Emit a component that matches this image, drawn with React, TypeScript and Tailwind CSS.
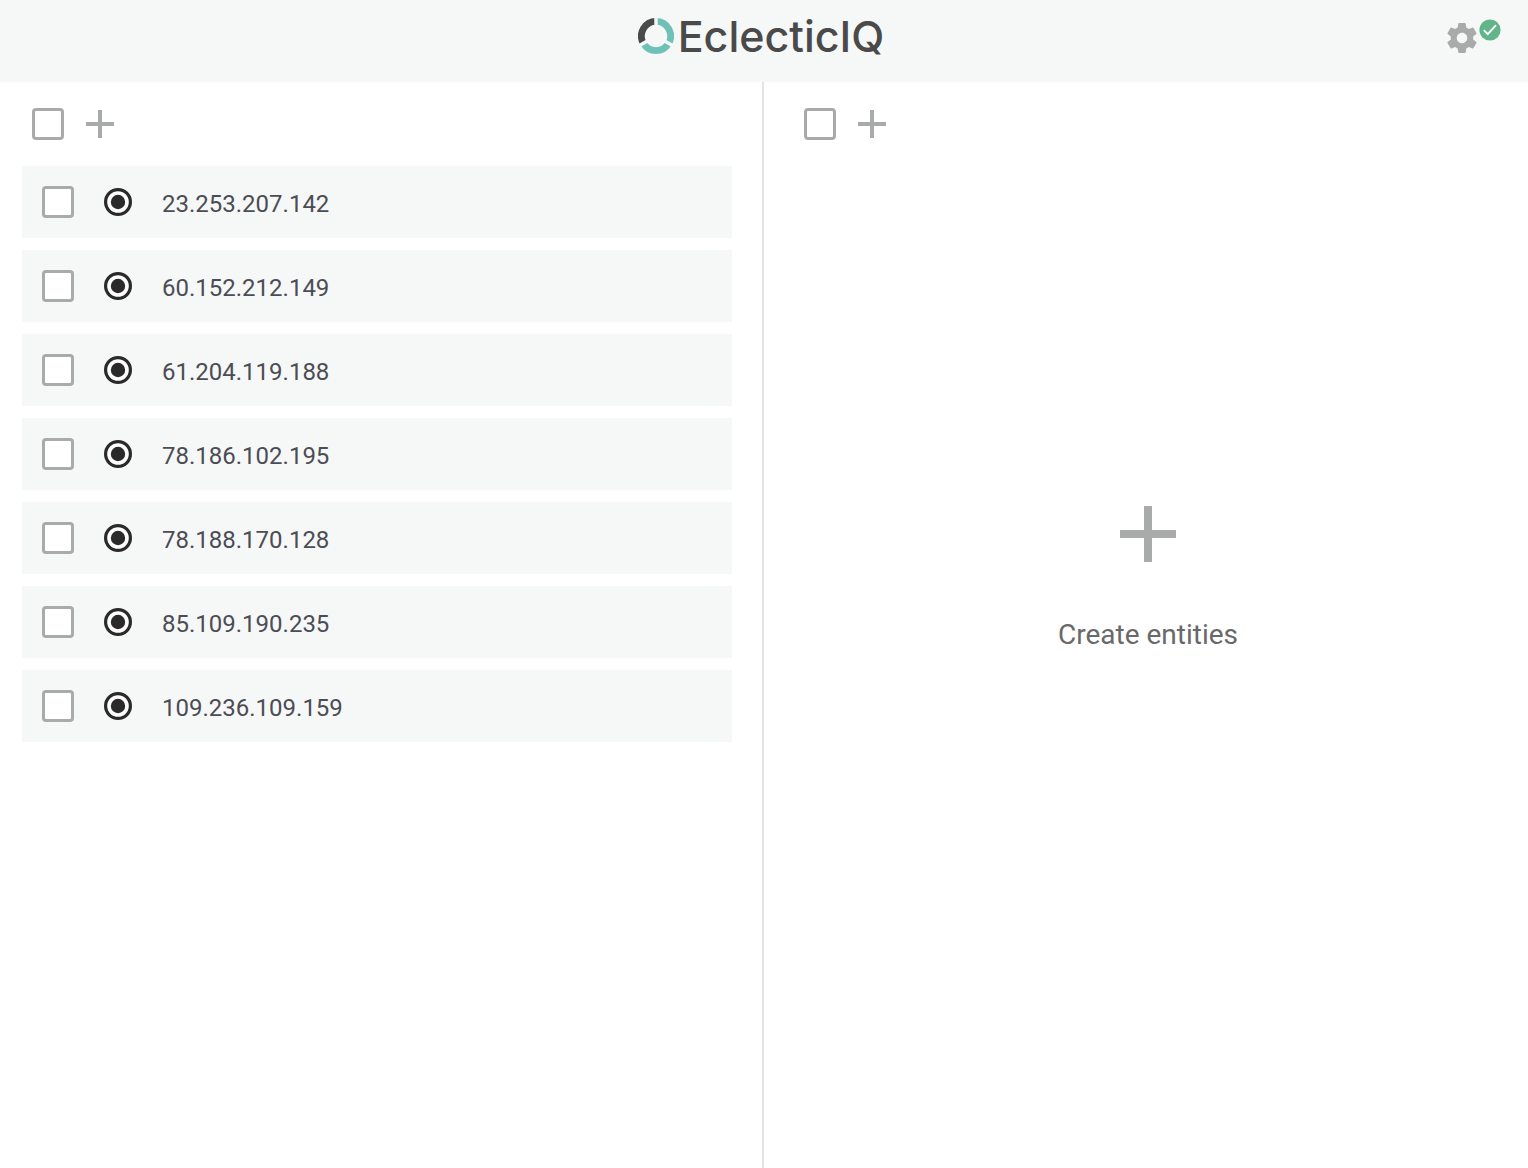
import { useState } from "react";

const observables = [
  "23.253.207.142",
  "60.152.212.149",
  "61.204.119.188",
  "78.186.102.195",
  "78.188.170.128",
  "85.109.190.235",
  "109.236.109.159",
];

function LogoMark() {
  return (
    <svg className="size-9 shrink-0" viewBox="-18 -18 36 36" fill="none" aria-hidden="true">
      <g strokeWidth="6.8">
        <path d="M-12.64 7.3A14.6 14.6 0 0 1 0 -14.6" stroke="#4a4a4a" />
        <path d="M0 -14.6A14.6 14.6 0 0 1 12.64 7.3" stroke="#6fc1b7" />
        <path d="M12.64 7.3A14.6 14.6 0 0 1 -12.64 7.3" stroke="#6fc1b7" />
      </g>
      <path d="M0 0V-19M0 0L-16.5 9.5M0 0L16.5 9.5" stroke="#f6f8f7" strokeWidth="3.4" />
    </svg>
  );
}

function GearIcon() {
  return (
    <svg className="size-[30px]" viewBox="2 2 20 20" fill="#a9abaa" aria-hidden="true">
      <path d="M19.43 12.98c.04-.32.07-.64.07-.98s-.03-.66-.07-.98l2.11-1.65c.19-.15.24-.42.12-.64l-2-3.46c-.12-.22-.39-.3-.61-.22l-2.49 1c-.52-.4-1.08-.73-1.69-.98l-.38-2.65C14.46 2.18 14.25 2 14 2h-4c-.25 0-.46.18-.49.42l-.38 2.65c-.61.25-1.17.59-1.69.98l-2.49-1c-.23-.09-.49 0-.61.22l-2 3.46c-.13.22-.07.49.12.64l2.11 1.65c-.04.32-.07.65-.07.98s.03.66.07.98l-2.11 1.65c-.19.15-.24.42-.12.64l2 3.46c.12.22.39.3.61.22l2.49-1c.52.4 1.08.73 1.69.98l.38 2.65c.03.24.24.42.49.42h4c.25 0 .46-.18.49-.42l.38-2.65c.61-.25 1.17-.59 1.69-.98l2.49 1c.23.09.49 0 .61-.22l2-3.46c.12-.22.07-.49-.12-.64l-2.11-1.65zM12 15.5c-1.93 0-3.5-1.57-3.5-3.5s1.57-3.5 3.5-3.5 3.5 1.57 3.5 3.5-1.57 3.5-3.5 3.5z" />
    </svg>
  );
}

function StatusBadge() {
  return (
    <svg className="mb-4 size-[22px]" viewBox="0 0 22 22" fill="none" aria-hidden="true">
      <circle cx="11" cy="11" r="10.6" fill="#61b588" />
      <path d="M4.8 11.2L8.8 15.2L17 6.2" stroke="#fff" strokeWidth="1.9" />
    </svg>
  );
}

function PlusIcon({ className }: { className: string }) {
  return (
    <svg className={className} viewBox="0 0 14 14" fill="#a9abaa" aria-hidden="true">
      <path d="M6 0h2v6h6v2H8v6H6V8H0V6h6z" />
    </svg>
  );
}

function ObservableIcon() {
  return (
    <svg className="size-7 shrink-0" viewBox="0 0 28 28" aria-hidden="true">
      <circle cx="14" cy="14" r="12.4" fill="#fff" stroke="#2a2a2a" strokeWidth="3.2" />
      <circle cx="14" cy="14" r="7.2" fill="#2a2a2a" />
    </svg>
  );
}

type CheckboxProps = {
  label?: string;
  id?: string;
  checked: boolean;
  onChange: (checked: boolean) => void;
};

function Checkbox({ label, id, checked, onChange }: CheckboxProps) {
  return (
    <input
      type="checkbox"
      id={id}
      aria-label={label}
      checked={checked}
      onChange={(e) => onChange(e.target.checked)}
      className="size-8 shrink-0 cursor-pointer appearance-none rounded border-3 border-[#a9abaa] bg-white checked:bg-[#6fc1b7]"
    />
  );
}

type ToolbarProps = {
  selectLabel: string;
  addLabel: string;
  checked: boolean;
  onChange: (checked: boolean) => void;
};

function Toolbar({ selectLabel, addLabel, checked, onChange }: ToolbarProps) {
  return (
    <div className="flex items-center gap-[22px] py-[26px]">
      <Checkbox label={selectLabel} checked={checked} onChange={onChange} />
      <button type="button" aria-label={addLabel} className="cursor-pointer">
        <PlusIcon className="size-7" />
      </button>
    </div>
  );
}

export default function App() {
  const [selected, setSelected] = useState<string[]>([]);
  const [allEntities, setAllEntities] = useState(false);

  const toggle = (value: string, on: boolean) =>
    setSelected((current) => (on ? [...current, value] : current.filter((v) => v !== value)));

  return (
    <div className="flex min-h-screen flex-col bg-white font-['Roboto',sans-serif]">
      <header className="grid h-[82px] grid-cols-[1fr_auto_1fr] items-center bg-[#f6f8f7] pb-2.5">
        <h1 className="col-start-2 flex items-center gap-1 pr-1.5 font-['Inter',sans-serif] text-[43px] leading-[48px] font-medium text-[#4a4a4a]">
          <LogoMark />
          EclecticIQ
        </h1>
        <button
          type="button"
          aria-label="Settings, connected"
          className="mr-[27px] flex cursor-pointer items-center gap-0.5 justify-self-end pt-1"
        >
          <GearIcon />
          <StatusBadge />
        </button>
      </header>

      <main className="grid flex-1 grid-cols-2">
        <section aria-label="Observables" className="border-r-2 border-[#e4e4e4] pr-[30px] pl-[22px]">
          <div className="pl-2.5">
            <Toolbar
              selectLabel="Select all observables"
              addLabel="Add observable"
              checked={selected.length === observables.length}
              onChange={(on) => setSelected(on ? observables : [])}
            />
          </div>
          <ul className="flex flex-col gap-3">
            {observables.map((value) => (
              <li key={value} className="flex h-[72px] items-center bg-[#f6f8f7] px-5">
                <Checkbox
                  id={value}
                  checked={selected.includes(value)}
                  onChange={(on) => toggle(value, on)}
                />
                <label htmlFor={value} className="flex items-center gap-[30px] pl-[30px] text-2xl text-[#4c4c55]">
                  <ObservableIcon />
                  <span className="pt-1">{value}</span>
                </label>
              </li>
            ))}
          </ul>
        </section>

        <section aria-label="Entities" className="flex flex-col pl-10">
          <Toolbar
            selectLabel="Select all entities"
            addLabel="Add entity"
            checked={allEntities}
            onChange={setAllEntities}
          />
          <button
            type="button"
            className="mt-[340px] mr-9 flex cursor-pointer flex-col items-center gap-[57px] self-center text-[28px] leading-8 text-[#696969]"
          >
            <PlusIcon className="size-14" />
            Create entities
          </button>
        </section>
      </main>
    </div>
  );
}
